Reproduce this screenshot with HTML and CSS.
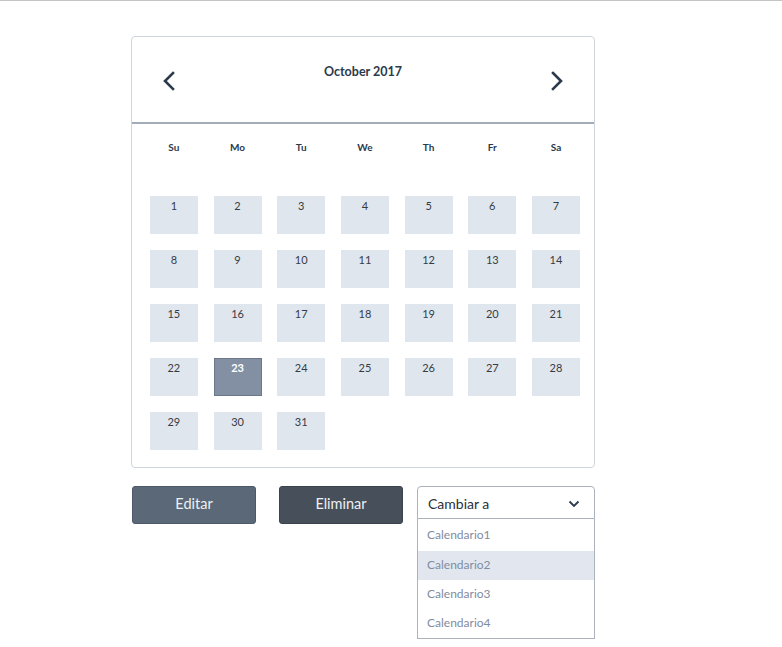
FILE: index.html
```html
<!DOCTYPE html>
<html>
<head>
<meta charset="utf-8">
<link rel="stylesheet" href="styles.css">
</head>
<body>
<div class="page">
  <div class="calendar">
    <div class="cal-header">
      <span class="nav">
        <svg width="14" height="20" viewBox="0 0 14 20"><path d="M11 2 L3 10 L11 18" fill="none" stroke="#2b3a4c" stroke-width="2.6" stroke-linecap="square"/></svg>
      </span>
      <div class="title">October 2017</div>
      <span class="nav">
        <svg width="14" height="20" viewBox="0 0 14 20"><path d="M3 2 L11 10 L3 18" fill="none" stroke="#2b3a4c" stroke-width="2.6" stroke-linecap="square"/></svg>
      </span>
    </div>
    <div class="cal-body">
      <div class="weekdays">
        <span>Su</span><span>Mo</span><span>Tu</span><span>We</span><span>Th</span><span>Fr</span><span>Sa</span>
      </div>
      <div class="days">
        <div class="day">1</div><div class="day">2</div><div class="day">3</div><div class="day">4</div><div class="day">5</div><div class="day">6</div><div class="day">7</div>
        <div class="day">8</div><div class="day">9</div><div class="day">10</div><div class="day">11</div><div class="day">12</div><div class="day">13</div><div class="day">14</div>
        <div class="day">15</div><div class="day">16</div><div class="day">17</div><div class="day">18</div><div class="day">19</div><div class="day">20</div><div class="day">21</div>
        <div class="day">22</div><div class="day selected">23</div><div class="day">24</div><div class="day">25</div><div class="day">26</div><div class="day">27</div><div class="day">28</div>
        <div class="day">29</div><div class="day">30</div><div class="day">31</div>
      </div>
    </div>
  </div>
  <div class="actions">
    <button class="btn btn-edit">Editar</button>
    <button class="btn btn-delete">Eliminar</button>
    <div class="dropdown">
      <div class="select">
        <span>Cambiar a</span>
        <svg width="12" height="8" viewBox="0 0 12 8"><path d="M1.5 1.5 L6 6 L10.5 1.5" fill="none" stroke="#2b3a4c" stroke-width="1.8"/></svg>
      </div>
      <ul class="options">
        <li>Calendario1</li>
        <li class="active">Calendario2</li>
        <li>Calendario3</li>
        <li>Calendario4</li>
      </ul>
    </div>
  </div>
</div>
</body>
</html>
```

FILE: styles.css
```css
html, body {
  margin: 0;
  padding: 0;
  background: #ffffff;
}
body {
  font-family: Lato, "Open Sans", sans-serif;
  border-top: 1px solid #c4c4c4;
}
.page {
  padding: 35px 0 0 131px;
}
.calendar {
  width: 462px;
  border: 1px solid #cfd5dd;
  border-radius: 4px;
}
.cal-header {
  height: 85px;
  display: flex;
  justify-content: space-between;
  align-items: flex-start;
  padding: 0 30px 0 30px;
  border-bottom: 2px solid #a3acb8;
}
.nav {
  margin-top: 34px;
  display: block;
  width: 14px;
  height: 20px;
}
.nav svg { display: block; }
.title {
  margin-top: 27px;
  font-size: 12.5px;
  font-weight: 700;
  color: #2b3a4c;
}
.cal-body {
  padding: 16px 7px 17px 10px;
}
.weekdays {
  display: grid;
  grid-template-columns: repeat(7, 63.7px);
  text-align: center;
  font-size: 10px;
  font-weight: 700;
  color: #2b3a4c;
  line-height: 14px;
  height: 14px;
}
.days {
  margin-top: 42px;
  display: grid;
  grid-template-columns: repeat(7, 63.7px);
  row-gap: 16px;
  justify-items: center;
}
.day {
  width: 48px;
  height: 38px;
  box-sizing: border-box;
  background: #e0e6ee;
  text-align: center;
  font-size: 11px;
  line-height: 14px;
  padding-top: 3px;
  color: #363c44;
}
.day.selected {
  background: #8390a3;
  border: 1px solid #6c7788;
  padding-top: 2px;
  color: #ffffff;
  font-weight: 700;
}
.actions {
  margin-top: 18px;
  display: flex;
  align-items: flex-start;
}
.btn {
  width: 124px;
  height: 38px;
  border-radius: 3px;
  font-family: Lato, "Open Sans", sans-serif;
  font-size: 14.5px;
  color: #eef1f4;
  padding: 0 0 3px 0;
  cursor: pointer;
}
.btn-edit {
  margin-left: 1px;
  background: #5b6878;
  border: 1px solid #4d5968;
}
.btn-delete {
  margin-left: 23px;
  background: #474f5a;
  border: 1px solid #3b434d;
}
.dropdown {
  margin-left: 14px;
  width: 178px;
}
.select {
  height: 33px;
  box-sizing: border-box;
  border: 1px solid #aab2bd;
  border-radius: 4px 4px 0 0;
  display: flex;
  align-items: center;
  justify-content: space-between;
  padding: 2px 14px 0 10px;
  font-size: 14px;
  color: #2b3138;
}
.select svg { display: block; }
.options {
  list-style: none;
  margin: 0;
  padding: 0;
  border: 1px solid #aab2bd;
  border-top: none;
}
.options li {
  height: 29px;
  line-height: 27px;
  padding-left: 9px;
  font-size: 12px;
  color: #7f8ca2;
}
.options li:first-child {
  height: 32px;
  line-height: 32px;
}
.options li.active {
  background: #e2e7ef;
}
```
